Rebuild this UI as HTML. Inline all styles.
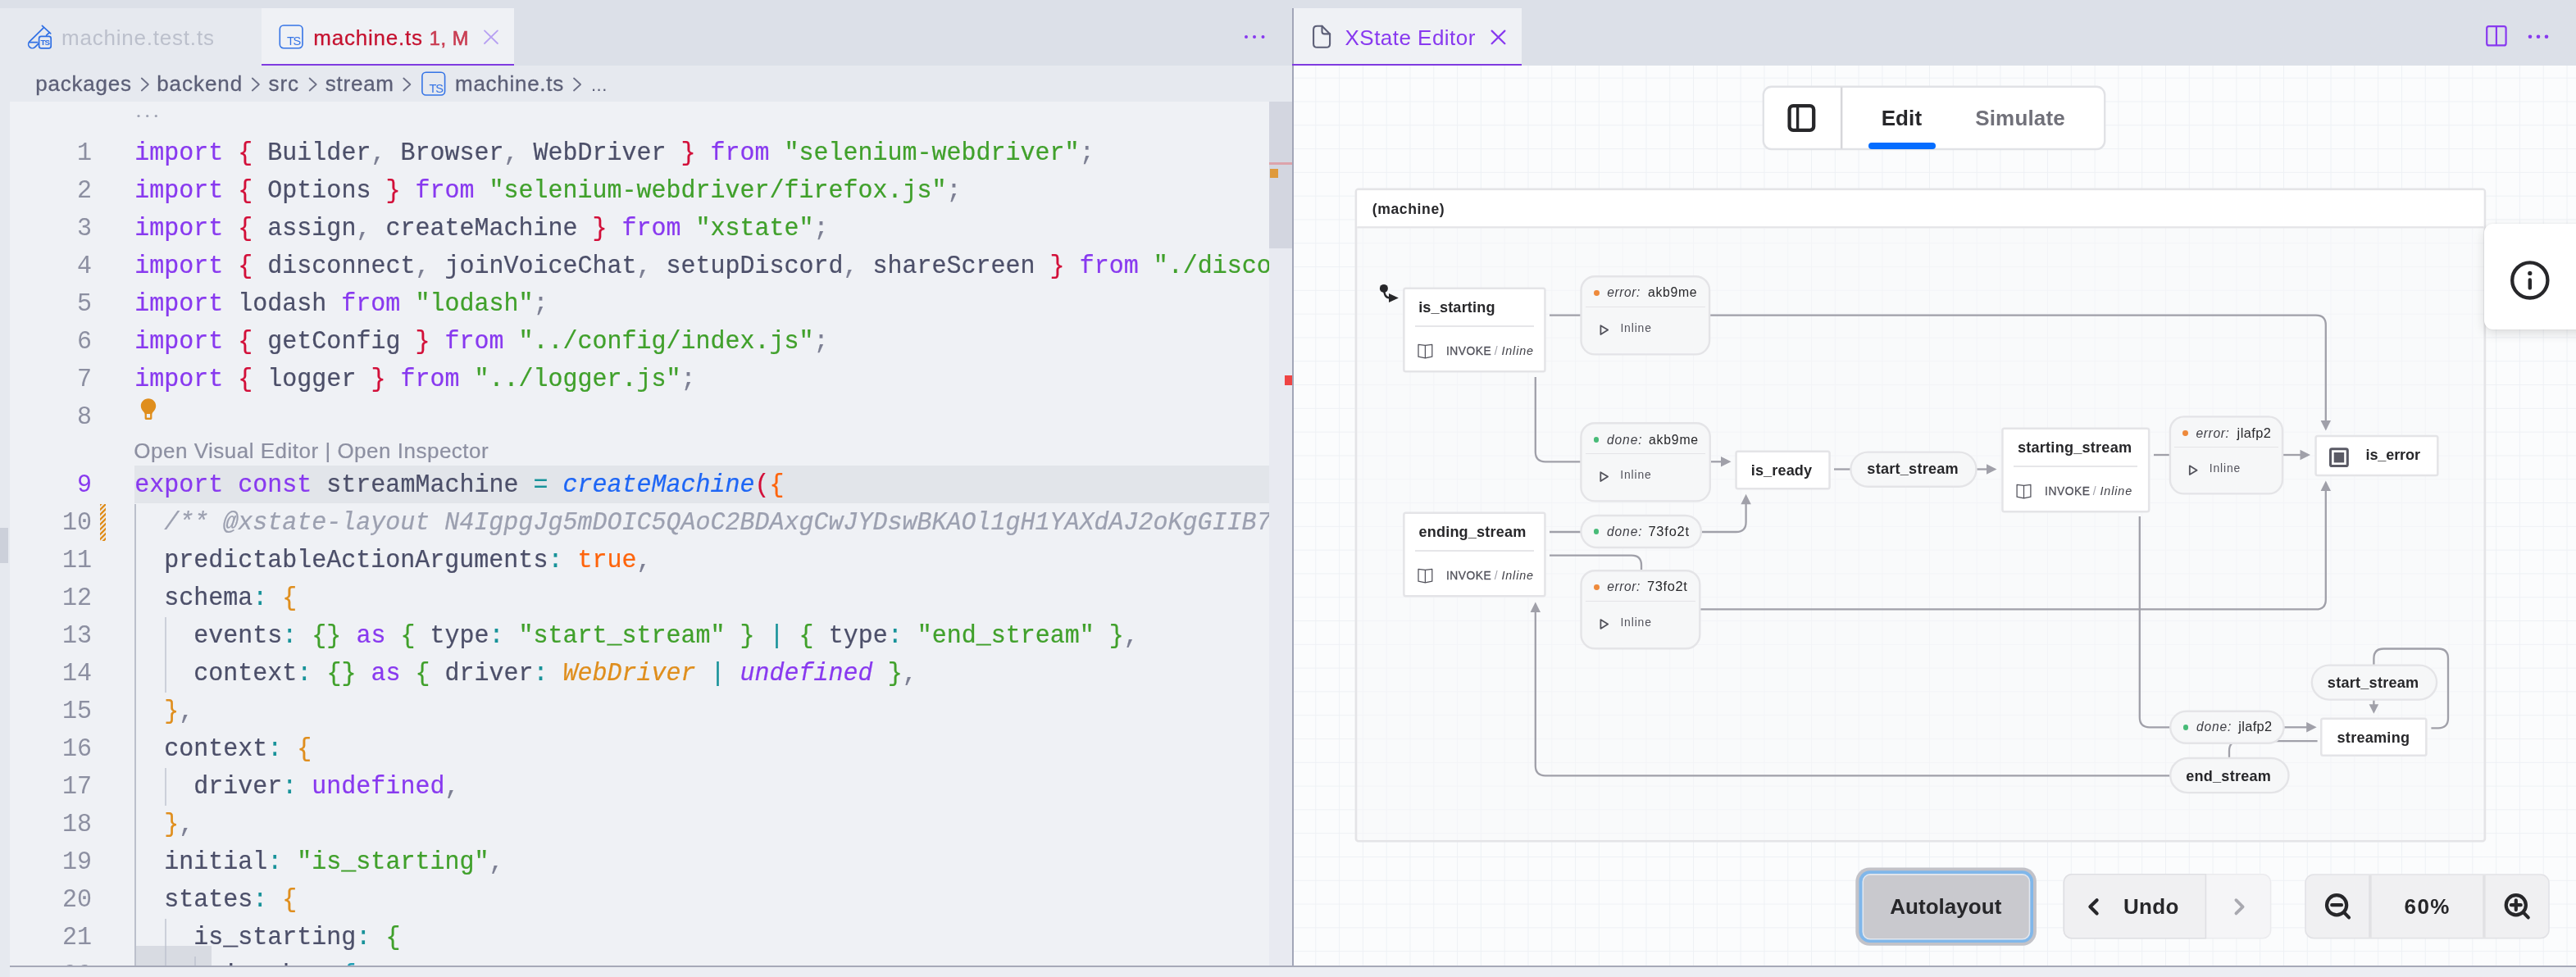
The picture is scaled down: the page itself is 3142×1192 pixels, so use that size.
<!DOCTYPE html>
<html lang="en"><head><meta charset="utf-8"><title>machine.ts - XState Editor</title>
<style>
html,body{margin:0;padding:0;}
body{width:3142px;height:1192px;position:relative;overflow:hidden;background:#eff1f5;font-family:"Liberation Sans",sans-serif;}
body div{position:absolute;box-sizing:border-box;}
#app{left:0;top:0;width:3142px;height:1192px;will-change:transform;overflow:hidden;}
.t{white-space:pre;}
svg{position:absolute;left:0;top:0;overflow:visible;}
.code{font-family:"Liberation Mono",monospace;font-size:30px;line-height:46px;height:46px;white-space:pre;color:#4c4f69;left:164.3px;transform:scaleY(1.05);transform-origin:0 31px;-webkit-text-stroke:0.22px currentColor;}
.code span{position:static;}
.ln{font-family:"Liberation Mono",monospace;font-size:30px;line-height:46px;height:46px;width:100px;left:12px;text-align:right;color:#8c8fa1;transform:scaleY(1.05);transform-origin:0 31px;}
.k{color:#8839ef}.s{color:#40a02b}.p{color:#7c7f93}.o{color:#179299}.b1{color:#d20f39}.b2{color:#fe640b}.b3{color:#df8e1d}.b4{color:#40a02b}.b5{color:#209fb5}
.f{color:#1e66f5;font-style:italic}.c{color:#9ca0b0;font-style:italic}.n{color:#fe640b}.ty{color:#df8e1d;font-style:italic}.ui{color:#8839ef;font-style:italic}
</style></head>
<body>
<div id="app">
<div style="left:0.0px;top:0.0px;width:3142.0px;height:79.8px;background:#dce0e8;"></div>
<div style="left:0.0px;top:79.8px;width:1577.0px;height:44.2px;background:#e6e9ef;"></div>
<div style="left:0.0px;top:10.0px;width:319.0px;height:69.8px;background:#e6e9ef;"></div>
<div style="left:0.0px;top:124.0px;width:12.0px;height:1068.0px;background:#e6e9ef;"></div>
<div style="left:0.0px;top:644.0px;width:10.0px;height:43.0px;background:#ccd0da;"></div>
<div style="left:12.0px;top:124.0px;width:1536.0px;height:1055.0px;background:#eff1f5;"></div>
<div style="left:319.0px;top:10.0px;width:308.0px;height:69.8px;background:#eff1f5;"></div>
<div style="left:319.0px;top:77.5px;width:308.0px;height:2.3px;background:#7f3be0;"></div>
<svg width="3142" height="1192" viewBox="0 0 3142 1192">
<g fill="none" stroke="#2f6fe4" stroke-width="1.7" stroke-linejoin="round" stroke-linecap="round">
<path d="M51.4,31.3 L61.7,40.9"/>
<path d="M52.9,34.1 L36.1,50.6 A4.75,4.75 0 0 0 42.8,57.4 L47,53.2"/>
<path d="M60.2,39.6 L56.6,43.2"/>
<path d="M36.3,51.6 L45.6,51.6"/>
<rect x="47.6" y="44.3" width="14.6" height="14.6" rx="2.6" fill="#e6e9ef"/>
</g>
<g fill="none" stroke="#3574e6" stroke-width="1.6">
<rect x="341.3" y="31" width="27.7" height="27.7" rx="4.6"/>
<rect x="514.9" y="88.3" width="27.7" height="27.7" rx="4.6"/>
</g>
<g fill="none" stroke="#b7a0f2" stroke-width="1.8" stroke-linecap="round">
<path d="M591,37.4 L606.9,53 M606.9,37.4 L591,53"/>
</g>
<g fill="#8839ef"><circle cx="1520" cy="45" r="2"/><circle cx="1530" cy="45" r="2"/><circle cx="1540.5" cy="45" r="2"/></g>
<g fill="none" stroke="#6c6f85" stroke-width="1.8" stroke-linecap="round" stroke-linejoin="round">
<path d="M172.8,95.5 L180.9,103 L172.8,110.5"/>
<path d="M307.8,95.5 L315.9,103 L307.8,110.5"/>
<path d="M377.6,95.5 L385.7,103 L377.6,110.5"/>
<path d="M492.3,95.5 L500.4,103 L492.3,110.5"/>
<path d="M700,95.5 L708.1,103 L700,110.5"/>
</g>
</svg>
<div class="t" style="left:49.60px;top:46px;font-size:9.80px;line-height:11px;color:#2f6fe4;font-weight:bold;font-style:normal;letter-spacing:-1.0px;">TS</div>
<div class="t" style="left:350.00px;top:42px;font-size:14.60px;line-height:16px;color:#3574e6;font-weight:normal;font-style:normal;letter-spacing:-1.3px;">TS</div>
<div class="t" style="left:523.60px;top:100px;font-size:14.60px;line-height:16px;color:#3574e6;font-weight:normal;font-style:normal;letter-spacing:-1.3px;">TS</div>
<div class="t" style="left:74.95px;top:31px;font-size:26.00px;line-height:30px;color:#bcc0cc;font-weight:normal;font-style:normal;letter-spacing:0.794px;">machine.test.ts</div>
<div class="t" style="left:382.25px;top:31px;font-size:26.00px;line-height:30px;color:#c5112f;font-weight:normal;font-style:normal;letter-spacing:0.773px;-webkit-text-stroke:0.25px #c5112f;">machine.ts</div>
<div class="t" style="left:523.83px;top:34px;font-size:23.60px;line-height:26px;color:#c93d52;font-weight:normal;font-style:normal;letter-spacing:0.572px;-webkit-text-stroke:0.6px #c93d52;">1, M</div>
<div class="t" style="left:43.31px;top:87px;font-size:26.00px;line-height:30px;color:#5c5f77;font-weight:normal;font-style:normal;letter-spacing:0.760px;-webkit-text-stroke:0.3px #5c5f77;">packages</div>
<div class="t" style="left:191.21px;top:87px;font-size:26.00px;line-height:30px;color:#5c5f77;font-weight:normal;font-style:normal;letter-spacing:0.939px;-webkit-text-stroke:0.3px #5c5f77;">backend</div>
<div class="t" style="left:327.59px;top:87px;font-size:26.00px;line-height:30px;color:#5c5f77;font-weight:normal;font-style:normal;letter-spacing:0.942px;-webkit-text-stroke:0.3px #5c5f77;">src</div>
<div class="t" style="left:396.79px;top:87px;font-size:26.00px;line-height:30px;color:#5c5f77;font-weight:normal;font-style:normal;letter-spacing:0.755px;-webkit-text-stroke:0.3px #5c5f77;">stream</div>
<div class="t" style="left:555.04px;top:87px;font-size:26.00px;line-height:30px;color:#5c5f77;font-weight:normal;font-style:normal;letter-spacing:0.717px;-webkit-text-stroke:0.3px #5c5f77;">machine.ts</div>
<div class="t" style="left:721.00px;top:91px;font-size:22.00px;line-height:25px;color:#5c5f77;font-weight:normal;font-style:normal;letter-spacing:0.5px;">...</div>
<svg width="3142" height="1192" viewBox="0 0 3142 1192"><g fill="#9ca0b0"><circle cx="169" cy="141.5" r="1.6"/><circle cx="179.7" cy="141.5" r="1.6"/><circle cx="190.3" cy="141.5" r="1.6"/></g></svg>
<div style="left:164.3px;top:568.4px;width:1383.7px;height:45.5px;background:#e2e5ea;"></div>
<div class="ln" style="top:163.6px;color:#8c8fa1;">1</div>
<div class="code" style="top:163.6px;"><span class="k">import</span> <span class="b1">{</span> Builder<span class="p">,</span> Browser<span class="p">,</span> WebDriver <span class="b1">}</span> <span class="k">from</span> <span class="s">"selenium-webdriver"</span><span class="p">;</span></div>
<div class="ln" style="top:209.6px;color:#8c8fa1;">2</div>
<div class="code" style="top:209.6px;"><span class="k">import</span> <span class="b1">{</span> Options <span class="b1">}</span> <span class="k">from</span> <span class="s">"selenium-webdriver/firefox.js"</span><span class="p">;</span></div>
<div class="ln" style="top:255.6px;color:#8c8fa1;">3</div>
<div class="code" style="top:255.6px;"><span class="k">import</span> <span class="b1">{</span> assign<span class="p">,</span> createMachine <span class="b1">}</span> <span class="k">from</span> <span class="s">"xstate"</span><span class="p">;</span></div>
<div class="ln" style="top:301.6px;color:#8c8fa1;">4</div>
<div class="code" style="top:301.6px;"><span class="k">import</span> <span class="b1">{</span> disconnect<span class="p">,</span> joinVoiceChat<span class="p">,</span> setupDiscord<span class="p">,</span> shareScreen <span class="b1">}</span> <span class="k">from</span> <span class="s">"./disco</span></div>
<div class="ln" style="top:347.6px;color:#8c8fa1;">5</div>
<div class="code" style="top:347.6px;"><span class="k">import</span> lodash <span class="k">from</span> <span class="s">"lodash"</span><span class="p">;</span></div>
<div class="ln" style="top:393.6px;color:#8c8fa1;">6</div>
<div class="code" style="top:393.6px;"><span class="k">import</span> <span class="b1">{</span> getConfig <span class="b1">}</span> <span class="k">from</span> <span class="s">"../config/index.js"</span><span class="p">;</span></div>
<div class="ln" style="top:439.6px;color:#8c8fa1;">7</div>
<div class="code" style="top:439.6px;"><span class="k">import</span> <span class="b1">{</span> logger <span class="b1">}</span> <span class="k">from</span> <span class="s">"../logger.js"</span><span class="p">;</span></div>
<div class="ln" style="top:485.6px;color:#8c8fa1;">8</div>
<div class="code" style="top:485.6px;"></div>
<div class="t" style="left:163.36px;top:535px;font-size:26.00px;line-height:30px;color:#8c8fa1;font-weight:normal;font-style:normal;letter-spacing:0.501px;-webkit-text-stroke:0.2px #8c8fa1;">Open Visual Editor | Open Inspector</div>
<div class="ln" style="top:569.2px;color:#8839ef;">9</div>
<div class="code" style="top:569.2px;"><span class="k">export</span> <span class="k">const</span> streamMachine <span class="o">=</span> <span class="f">createMachine</span><span class="b1">(</span><span class="b2">{</span></div>
<div class="ln" style="top:615.2px;color:#8c8fa1;">10</div>
<div class="code" style="top:615.2px;"><span class="c">  /** @xstate-layout N4IgpgJg5mDOIC5QAoC2BDAxgCwJYDswBKAOl1gH1YAXdAJ2oKgGIIB7</span></div>
<div class="ln" style="top:661.2px;color:#8c8fa1;">11</div>
<div class="code" style="top:661.2px;">  predictableActionArguments<span class="o">:</span> <span class="n">true</span><span class="p">,</span></div>
<div class="ln" style="top:707.2px;color:#8c8fa1;">12</div>
<div class="code" style="top:707.2px;">  schema<span class="o">:</span> <span class="b3">{</span></div>
<div class="ln" style="top:753.2px;color:#8c8fa1;">13</div>
<div class="code" style="top:753.2px;">    events<span class="o">:</span> <span class="b4">{}</span> <span class="k">as</span> <span class="b4">{</span> type<span class="o">:</span> <span class="s">"start_stream"</span> <span class="b4">}</span> <span class="o">|</span> <span class="b4">{</span> type<span class="o">:</span> <span class="s">"end_stream"</span> <span class="b4">}</span><span class="p">,</span></div>
<div class="ln" style="top:799.2px;color:#8c8fa1;">14</div>
<div class="code" style="top:799.2px;">    context<span class="o">:</span> <span class="b4">{}</span> <span class="k">as</span> <span class="b4">{</span> driver<span class="o">:</span> <span class="ty">WebDriver</span> <span class="o">|</span> <span class="ui">undefined</span> <span class="b4">}</span><span class="p">,</span></div>
<div class="ln" style="top:845.2px;color:#8c8fa1;">15</div>
<div class="code" style="top:845.2px;">  <span class="b3">}</span><span class="p">,</span></div>
<div class="ln" style="top:891.2px;color:#8c8fa1;">16</div>
<div class="code" style="top:891.2px;">  context<span class="o">:</span> <span class="b3">{</span></div>
<div class="ln" style="top:937.2px;color:#8c8fa1;">17</div>
<div class="code" style="top:937.2px;">    driver<span class="o">:</span> <span class="k">undefined</span><span class="p">,</span></div>
<div class="ln" style="top:983.2px;color:#8c8fa1;">18</div>
<div class="code" style="top:983.2px;">  <span class="b3">}</span><span class="p">,</span></div>
<div class="ln" style="top:1029.2px;color:#8c8fa1;">19</div>
<div class="code" style="top:1029.2px;">  initial<span class="o">:</span> <span class="s">"is_starting"</span><span class="p">,</span></div>
<div class="ln" style="top:1075.2px;color:#8c8fa1;">20</div>
<div class="code" style="top:1075.2px;">  states<span class="o">:</span> <span class="b3">{</span></div>
<div class="ln" style="top:1121.2px;color:#8c8fa1;">21</div>
<div class="code" style="top:1121.2px;">    is_starting<span class="o">:</span> <span class="b4">{</span></div>
<div class="ln" style="top:1167.2px;color:#8c8fa1;">22</div>
<div class="code" style="top:1167.2px;">      invoke<span class="o">:</span> <span class="b5">{</span></div>
<div style="left:164.4px;top:614.5px;width:1.8px;height:563.5px;background:#bcc0cc;"></div>
<div style="left:200.5px;top:753.0px;width:2.0px;height:92.0px;background:#ccd0da;"></div>
<div style="left:200.5px;top:937.0px;width:2.0px;height:46.0px;background:#ccd0da;"></div>
<div style="left:200.5px;top:1121.0px;width:2.0px;height:57.0px;background:#ccd0da;"></div>
<div style="left:236.5px;top:1167.0px;width:2.0px;height:11.0px;background:#ccd0da;"></div>
<div style="left:166.0px;top:1154.0px;width:92.0px;height:24.0px;background:rgba(188,192,204,0.45);"></div>
<div style="left:122.0px;top:615.0px;width:6.5px;height:45.0px;background:repeating-linear-gradient(135deg,#df8e1d 0 2px,rgba(223,142,29,0.15) 2px 4.2px);"></div>
<svg width="3142" height="1192" viewBox="0 0 3142 1192">
<path d="M181,486.3 C175.8,486.3 171.8,490.3 171.8,495.3 C171.8,498.6 173.6,500.9 175.4,502.8 C176.2,503.8 176.6,504.6 176.6,505.6 L176.6,510.2 C176.6,511.3 177.4,512 178.5,512 L183.5,512 C184.6,512 185.4,511.3 185.4,510.2 L185.4,505.6 C185.4,504.6 185.8,503.8 186.6,502.8 C188.4,500.9 190.2,498.6 190.2,495.3 C190.2,490.3 186.2,486.3 181,486.3 Z" fill="#df8e1d"/>
<rect x="178.9" y="505" width="4.2" height="4.6" fill="#eff1f5"/>
</svg>
<div style="left:1548.0px;top:124.0px;width:28.5px;height:1055.0px;background:#e8eaf1;"></div>
<div style="left:1548.0px;top:124.0px;width:28.5px;height:179.0px;background:#d3d6e0;"></div>
<div style="left:1548.0px;top:198.0px;width:28.5px;height:3.0px;background:#dca3ab;"></div>
<div style="left:1549.0px;top:205.5px;width:9.5px;height:11.0px;background:#df9a3c;"></div>
<div style="left:1567.0px;top:458.0px;width:9.5px;height:12.0px;background:#ef4444;"></div>
<div style="left:1576.3px;top:10.0px;width:2.0px;height:1170.0px;background:#a2a6b8;"></div>
<div style="left:12.0px;top:1178.0px;width:3130.0px;height:2.0px;background:#a6a9b8;"></div>
<div style="left:12.0px;top:1180.0px;width:3130.0px;height:12.0px;background:#eceef3;"></div>
<div style="left:1578.3px;top:0.0px;width:1563.7px;height:79.8px;background:#dce0e8;"></div>
<div style="left:1578.3px;top:79.8px;width:1563.7px;height:1098.4px;background-color:#fbfcfd;background-image:linear-gradient(to right,#eef1f5 1.4px,transparent 1.4px),linear-gradient(to bottom,#eef1f5 1.4px,transparent 1.4px);background-size:28.8px 28.8px;background-position:26.3px 14.7px;"></div>
<div style="left:1578.3px;top:10.0px;width:277.7px;height:69.8px;background:#eff1f5;"></div>
<div style="left:1576.3px;top:77.5px;width:279.7px;height:2.3px;background:#7f3be0;"></div>
<div class="t" style="left:1640.51px;top:31px;font-size:26.00px;line-height:30px;color:#8839ef;font-weight:normal;font-style:normal;letter-spacing:0.473px;">XState Editor</div>
<svg width="3142" height="1192" viewBox="0 0 3142 1192">
<g fill="none" stroke="#5c5f77" stroke-width="2.1" stroke-linejoin="round" stroke-linecap="round">
<path d="M1612.5,31.8 L1606.5,31.8 Q1602.1,31.8 1602.1,36.2 L1602.1,53.4 Q1602.1,57.8 1606.5,57.8 L1617.7,57.8 Q1622.1,57.8 1622.1,53.4 L1622.1,41.4 Z"/>
<path d="M1612.5,31.8 L1612.5,38.4 Q1612.5,41.4 1615.5,41.4 L1622.1,41.4"/>
</g>
<g fill="none" stroke="#8839ef" stroke-width="2.2" stroke-linecap="round">
<path d="M1819.6,37.6 L1835.4,53.2 M1835.4,37.6 L1819.6,53.2"/>
</g>
<g fill="none" stroke="#8839ef" stroke-width="2.2" stroke-linejoin="round">
<rect x="3033.2" y="32.2" width="23.4" height="23.2" rx="2.5"/>
<path d="M3044.9,32.2 V55.4"/>
</g>
<g fill="#8839ef"><circle cx="3086" cy="44.8" r="2.3"/><circle cx="3096" cy="44.8" r="2.3"/><circle cx="3106" cy="44.8" r="2.3"/></g>
</svg>
<svg width="3142" height="1192" viewBox="0 0 3142 1192"><rect x="2150.8" y="105.8" width="416.4" height="76.2" rx="10" fill="#fff" stroke="#e1e2e6" stroke-width="2.4"/><rect x="2244.9" y="106.5" width="2.5" height="75" fill="#d6d6da"/></svg>
<svg width="3142" height="1192" viewBox="0 0 3142 1192">
<g fill="none" stroke="#27272a" stroke-linejoin="round">
<rect x="2182.6" y="129.2" width="29.6" height="29.6" rx="4.5" stroke-width="4.3"/>
<path d="M2192.6,129.2 V158.8" stroke-width="3.4"/>
</g></svg>
<div class="t" style="left:2294.64px;top:129px;font-size:26.00px;line-height:30px;color:#27272a;font-weight:bold;font-style:normal;letter-spacing:0.118px;">Edit</div>
<div class="t" style="left:2409.22px;top:129px;font-size:26.00px;line-height:30px;color:#71717a;font-weight:bold;font-style:normal;letter-spacing:0.167px;">Simulate</div>
<div style="left:2279.0px;top:173.9px;width:82.0px;height:8.2px;background:#056dff;border-radius:4.1px;"></div>
<svg width="3142" height="1192" viewBox="0 0 3142 1192"><rect x="1653.95" y="230.95" width="1376.9" height="795.3" rx="3" fill="rgba(248,248,249,0.5)" stroke="#e4e4e7" stroke-width="2.7"/><rect x="1655.3" y="232.3" width="1374.2" height="44.6" fill="#fff"/><rect x="1655.3" y="276.2" width="1374.2" height="2.2" fill="#e4e4e7"/></svg>
<div class="t" style="left:1673.72px;top:245px;font-size:17.60px;line-height:20px;color:#27272a;font-weight:bold;font-style:normal;letter-spacing:0.606px;">(machine)</div>
<svg width="3142" height="1192" viewBox="0 0 3142 1192"><g fill="none" stroke="#a0a0a9" stroke-width="2.3"><path d="M1890,384.7 H1930"/><path d="M2084,384.7 H2824.8 Q2836.8,384.7 2836.8,396.7 V514"/><path d="M1872.8,460 V551.3 Q1872.8,563.3 1884.8,563.3 H1930"/><path d="M2084,563.3 H2100"/><path d="M1890,649 H1930"/><path d="M2073,649 H2117.6 Q2129.6,649 2129.6,637 V614"/><path d="M1890,677.7 H1990 Q2002,677.7 2002,689.7 V697"/><path d="M2072,743.4 H2824.8 Q2836.8,743.4 2836.8,731.4 V598"/><path d="M2237,572.5 H2259"/><path d="M2409,572.5 H2424"/><path d="M2627,555 H2649"/><path d="M2782,555 H2806"/><path d="M2609.8,630 V875.3 Q2609.8,887.3 2621.8,887.3 H2649"/><path d="M2784,887.3 H2814"/><path d="M2965.4,888.3 H2974 Q2986,888.3 2986,876.3 V803.5 Q2986,791.5 2974,791.5 H2907.4 Q2895.4,791.5 2895.4,803.5 V813"/><path d="M2895.4,852 V860"/><path d="M2826.6,904.2 H2731 Q2719,904.2 2719,916.2 V926"/><path d="M2649,946.3 H1884.8 Q1872.8,946.3 1872.8,934.3 V746"/></g><polygon points="2836.8,525.4 2830.6,512.9 2843.0,512.9" fill="#a0a0a9"/><polygon points="2111.5,563.3 2099.0,557.1 2099.0,569.5" fill="#a0a0a9"/><polygon points="2129.6,602.8 2123.4,615.3 2135.8,615.3" fill="#a0a0a9"/><polygon points="2836.8,586.4 2830.6,598.9 2843.0,598.9" fill="#a0a0a9"/><polygon points="2435.5,572.5 2423.0,566.3 2423.0,578.7" fill="#a0a0a9"/><polygon points="2818.0,555.0 2805.5,548.8 2805.5,561.2" fill="#a0a0a9"/><polygon points="2825.7,887.3 2813.2,881.1 2813.2,893.5" fill="#a0a0a9"/><polygon points="2895.4,870.8 2889.6,859.3 2901.2,859.3" fill="#a0a0a9"/><polygon points="1872.8,734.6 1866.6,747.1 1879.0,747.1" fill="#a0a0a9"/>
<g fill="#27272a"><circle cx="1687.9" cy="351.9" r="5"/><polygon points="1705.9,363.5 1694,358 1694,369"/></g><path d="M1687.9,352 C1688.5,360 1690,363.5 1696,363.5" fill="none" stroke="#27272a" stroke-width="2.4"/></svg>
<svg width="3142" height="1192" viewBox="0 0 3142 1192"><rect x="1712.35" y="351.65" width="172.10" height="101.50" rx="2.25" fill="#fff" stroke="#e4e4e7" stroke-width="2.5"/><rect x="1712.35" y="625.65" width="172.10" height="101.50" rx="2.25" fill="#fff" stroke="#e4e4e7" stroke-width="2.5"/><rect x="2442.45" y="522.65" width="178.70" height="101.50" rx="2.25" fill="#fff" stroke="#e4e4e7" stroke-width="2.5"/><rect x="2117.55" y="550.85" width="114.00" height="45.30" rx="2.25" fill="#fff" stroke="#e4e4e7" stroke-width="2.5"/><rect x="2824.55" y="532.05" width="148.80" height="48.00" rx="2.25" fill="#fff" stroke="#e4e4e7" stroke-width="2.5"/><rect x="2831.25" y="876.85" width="128.10" height="44.90" rx="2.25" fill="#fff" stroke="#e4e4e7" stroke-width="2.5"/><rect x="1928.50" y="337.30" width="156.60" height="95.10" rx="16.80" fill="#f6f7f8" stroke="#e4e4e7" stroke-width="2.4"/><rect x="1928.40" y="516.30" width="157.40" height="95.10" rx="16.80" fill="#f6f7f8" stroke="#e4e4e7" stroke-width="2.4"/><rect x="1928.50" y="696.20" width="144.80" height="95.10" rx="16.80" fill="#f6f7f8" stroke="#e4e4e7" stroke-width="2.4"/><rect x="2646.90" y="508.40" width="137.10" height="94.00" rx="16.80" fill="#f6f7f8" stroke="#e4e4e7" stroke-width="2.4"/><rect x="1928.40" y="629.00" width="146.50" height="39.00" rx="19.50" fill="#f6f7f8" stroke="#e4e4e7" stroke-width="2.4"/><rect x="2647.20" y="867.80" width="138.40" height="39.00" rx="19.50" fill="#f6f7f8" stroke="#e4e4e7" stroke-width="2.4"/><rect x="2257.40" y="551.60" width="153.10" height="42.10" rx="21.05" fill="#f6f7f8" stroke="#e4e4e7" stroke-width="2.4"/><rect x="2819.80" y="811.60" width="152.30" height="42.00" rx="21.00" fill="#f6f7f8" stroke="#e4e4e7" stroke-width="2.4"/><rect x="2647.20" y="925.00" width="144.30" height="42.10" rx="21.05" fill="#f6f7f8" stroke="#e4e4e7" stroke-width="2.4"/></svg>
<div class="t" style="left:1730.13px;top:365px;font-size:18.10px;line-height:20px;color:#27272a;font-weight:bold;font-style:normal;letter-spacing:0.200px;">is_starting</div>
<div style="left:1726.0px;top:397.4px;width:144.8px;height:1.3px;background:#e6e6e9;"></div>
<div class="t" style="left:1763.92px;top:421px;font-size:13.80px;line-height:15px;color:#52525b;font-weight:normal;font-style:normal;letter-spacing:0.540px;-webkit-text-stroke:0.3px #52525b;">INVOKE</div>
<div class="t" style="left:1822.70px;top:420px;font-size:14.00px;line-height:16px;color:#a1a1aa;font-weight:normal;font-style:normal;letter-spacing:0.115px;">/</div>
<div class="t" style="left:1831.42px;top:420px;font-size:14.40px;line-height:16px;color:#3f3f46;font-weight:normal;font-style:italic;letter-spacing:0.853px;">Inline</div>
<div class="t" style="left:1730.48px;top:639px;font-size:18.10px;line-height:20px;color:#27272a;font-weight:bold;font-style:normal;letter-spacing:0.181px;">ending_stream</div>
<div style="left:1726.0px;top:671.4px;width:144.8px;height:1.3px;background:#e6e6e9;"></div>
<div class="t" style="left:1763.92px;top:695px;font-size:13.80px;line-height:15px;color:#52525b;font-weight:normal;font-style:normal;letter-spacing:0.540px;-webkit-text-stroke:0.3px #52525b;">INVOKE</div>
<div class="t" style="left:1822.70px;top:694px;font-size:14.00px;line-height:16px;color:#a1a1aa;font-weight:normal;font-style:normal;letter-spacing:0.115px;">/</div>
<div class="t" style="left:1831.42px;top:694px;font-size:14.40px;line-height:16px;color:#3f3f46;font-weight:normal;font-style:italic;letter-spacing:0.853px;">Inline</div>
<div class="t" style="left:2460.97px;top:536px;font-size:18.10px;line-height:20px;color:#27272a;font-weight:bold;font-style:normal;letter-spacing:0.237px;">starting_stream</div>
<div style="left:2456.1px;top:568.4px;width:151.4px;height:1.3px;background:#e6e6e9;"></div>
<div class="t" style="left:2494.02px;top:592px;font-size:13.80px;line-height:15px;color:#52525b;font-weight:normal;font-style:normal;letter-spacing:0.540px;-webkit-text-stroke:0.3px #52525b;">INVOKE</div>
<div class="t" style="left:2552.80px;top:591px;font-size:14.00px;line-height:16px;color:#a1a1aa;font-weight:normal;font-style:normal;letter-spacing:0.115px;">/</div>
<div class="t" style="left:2561.52px;top:591px;font-size:14.40px;line-height:16px;color:#3f3f46;font-weight:normal;font-style:italic;letter-spacing:0.853px;">Inline</div>
<div class="t" style="left:2135.73px;top:564px;font-size:18.10px;line-height:20px;color:#27272a;font-weight:bold;font-style:normal;letter-spacing:0.131px;">is_ready</div>
<div class="t" style="left:2885.53px;top:545px;font-size:18.10px;line-height:20px;color:#27272a;font-weight:bold;font-style:normal;letter-spacing:-0.141px;">is_error</div>
<div class="t" style="left:2850.57px;top:890px;font-size:18.10px;line-height:20px;color:#27272a;font-weight:bold;font-style:normal;letter-spacing:0.242px;">streaming</div>
<div style="left:1943.8px;top:354.3px;width:6.8px;height:6.8px;background:#ee8a3c;border-radius:50%;"></div>
<div class="t" style="left:1960.19px;top:348px;font-size:15.60px;line-height:17px;color:#3f3f46;font-weight:normal;font-style:italic;letter-spacing:0.589px;">error:</div>
<div class="t" style="left:2009.93px;top:348px;font-size:15.80px;line-height:17px;color:#27272a;font-weight:normal;font-style:normal;letter-spacing:0.687px;">akb9me</div>
<div style="left:1933.8px;top:373.6px;width:146.0px;height:1.2px;background:#e4e4e7;"></div>
<div class="t" style="left:1976.41px;top:392px;font-size:13.90px;line-height:16px;color:#52525b;font-weight:normal;font-style:normal;letter-spacing:0.851px;">Inline</div>
<div style="left:1943.7px;top:533.3px;width:6.8px;height:6.8px;background:#48bb78;border-radius:50%;"></div>
<div class="t" style="left:1960.09px;top:528px;font-size:15.60px;line-height:17px;color:#3f3f46;font-weight:normal;font-style:italic;letter-spacing:0.848px;">done:</div>
<div class="t" style="left:2011.03px;top:528px;font-size:15.80px;line-height:17px;color:#27272a;font-weight:normal;font-style:normal;letter-spacing:0.787px;">akb9me</div>
<div style="left:1933.7px;top:552.6px;width:146.8px;height:1.2px;background:#e4e4e7;"></div>
<div class="t" style="left:1976.31px;top:571px;font-size:13.90px;line-height:16px;color:#52525b;font-weight:normal;font-style:normal;letter-spacing:0.851px;">Inline</div>
<div style="left:1943.8px;top:713.2px;width:6.8px;height:6.8px;background:#ee8a3c;border-radius:50%;"></div>
<div class="t" style="left:1960.19px;top:707px;font-size:15.60px;line-height:17px;color:#3f3f46;font-weight:normal;font-style:italic;letter-spacing:0.589px;">error:</div>
<div class="t" style="left:2009.08px;top:706px;font-size:16.40px;line-height:18px;color:#27272a;font-weight:normal;font-style:normal;letter-spacing:0.650px;">73fo2t</div>
<div style="left:1933.8px;top:732.5px;width:134.2px;height:1.2px;background:#e4e4e7;"></div>
<div class="t" style="left:1976.41px;top:751px;font-size:13.90px;line-height:16px;color:#52525b;font-weight:normal;font-style:normal;letter-spacing:0.851px;">Inline</div>
<div style="left:2662.2px;top:525.4px;width:6.8px;height:6.8px;background:#ee8a3c;border-radius:50%;"></div>
<div class="t" style="left:2678.59px;top:520px;font-size:15.60px;line-height:17px;color:#3f3f46;font-weight:normal;font-style:italic;letter-spacing:0.589px;">error:</div>
<div class="t" style="left:2728.61px;top:519px;font-size:16.40px;line-height:18px;color:#27272a;font-weight:normal;font-style:normal;letter-spacing:0.403px;">jlafp2</div>
<div style="left:2652.2px;top:544.7px;width:126.5px;height:1.2px;background:#e4e4e7;"></div>
<div class="t" style="left:2694.81px;top:563px;font-size:13.90px;line-height:16px;color:#52525b;font-weight:normal;font-style:normal;letter-spacing:0.851px;">Inline</div>
<div style="left:1943.7px;top:645.3px;width:6.8px;height:6.8px;background:#48bb78;border-radius:50%;"></div>
<div class="t" style="left:1960.09px;top:640px;font-size:15.60px;line-height:17px;color:#3f3f46;font-weight:normal;font-style:italic;letter-spacing:0.848px;">done:</div>
<div class="t" style="left:2010.38px;top:639px;font-size:16.40px;line-height:18px;color:#27272a;font-weight:normal;font-style:normal;letter-spacing:0.830px;">73fo2t</div>
<div style="left:2662.5px;top:884.1px;width:6.8px;height:6.8px;background:#48bb78;border-radius:50%;"></div>
<div class="t" style="left:2678.89px;top:878px;font-size:15.60px;line-height:17px;color:#3f3f46;font-weight:normal;font-style:italic;letter-spacing:0.848px;">done:</div>
<div class="t" style="left:2730.21px;top:877px;font-size:16.40px;line-height:18px;color:#27272a;font-weight:normal;font-style:normal;letter-spacing:0.363px;">jlafp2</div>
<div class="t" style="left:2277.37px;top:562px;font-size:18.10px;line-height:20px;color:#27272a;font-weight:bold;font-style:normal;letter-spacing:0.243px;">start_stream</div>
<div class="t" style="left:2838.87px;top:823px;font-size:18.10px;line-height:20px;color:#27272a;font-weight:bold;font-style:normal;letter-spacing:0.243px;">start_stream</div>
<div class="t" style="left:2666.18px;top:937px;font-size:18.10px;line-height:20px;color:#27272a;font-weight:bold;font-style:normal;letter-spacing:0.236px;">end_stream</div>
<svg width="3142" height="1192" viewBox="0 0 3142 1192"><g fill="none" stroke="#52525b" stroke-linejoin="round" stroke-linecap="round"><path d="M1730.0,420.4 L1738.4,421.3 L1746.8,420.4 V435.2 L1738.4,436.8 L1730.0,435.2 Z M1738.4,421.3 V436.8" stroke-width="1.25"/><path d="M1730.0,694.4 L1738.4,695.3 L1746.8,694.4 V709.2 L1738.4,710.8 L1730.0,709.2 Z M1738.4,695.3 V710.8" stroke-width="1.25"/><path d="M2460.1,591.4 L2468.5,592.3 L2476.9,591.4 V606.2 L2468.5,607.8 L2460.1,606.2 Z M2468.5,592.3 V607.8" stroke-width="1.25"/><rect x="2842.5" y="547.7" width="20.8" height="20.8" rx="1.8" stroke="#5a5a65" stroke-width="3.1"/><rect x="2846.7" y="552" width="12.5" height="12.4" fill="#5a5a65" stroke="none"/><path d="M1952.4,397.2 L1961.2,402.6 L1952.4,408.0 Z" stroke-width="1.8"/><path d="M1952.3,576.2 L1961.1,581.6 L1952.3,587.0 Z" stroke-width="1.8"/><path d="M1952.4,756.1 L1961.2,761.5 L1952.4,766.9 Z" stroke-width="1.8"/><path d="M2670.8,568.3 L2679.6,573.7 L2670.8,579.1 Z" stroke-width="1.8"/></g></svg>
<div style="left:3029.6px;top:273.4px;width:130.0px;height:129.0px;background:#fff;border-radius:11px;box-shadow:0 5px 14px rgba(0,0,0,0.13),0 0 3px rgba(0,0,0,0.07);"></div>
<svg width="3142" height="1192" viewBox="0 0 3142 1192">
<circle cx="3085.8" cy="341.9" r="21.6" fill="none" stroke="#27272a" stroke-width="4.3"/>
<circle cx="3085.8" cy="333.4" r="2.6" fill="#27272a"/>
<path d="M3085.8,341.5 V351.4" stroke="#27272a" stroke-width="4.4" stroke-linecap="round"/>
</svg>
<svg width="3142" height="1192" viewBox="0 0 3142 1192"><rect x="2263.3" y="1058.4" width="220.6" height="95.3" rx="17" fill="#c2c2c8"/><rect x="2267.4" y="1062.3" width="212.6" height="87.6" rx="13.2" fill="#80b7ea"/><rect x="2272.3" y="1066.9" width="203.2" height="78.9" rx="8.8" fill="#c9c9ce" stroke="#e3e7ee" stroke-width="1.6"/></svg>
<div class="t" style="left:2305.25px;top:1091px;font-size:26.00px;line-height:30px;color:#27272a;font-weight:bold;font-style:normal;letter-spacing:0.032px;">Autolayout</div>
<svg width="3142" height="1192" viewBox="0 0 3142 1192"><rect x="2517.3" y="1066.8" width="252.3" height="77.9" rx="9.5" fill="#f5f5f7" stroke="#ebebee" stroke-width="1.6"/><path d="M2690.4,1066.8 H2526.8 A9.5,9.5 0 0 0 2517.3,1076.3 V1135.2 A9.5,9.5 0 0 0 2526.8,1144.7 H2690.4 Z" fill="#f0f0f2" stroke="#dfdfe3" stroke-width="1.6"/></svg>
<div class="t" style="left:2589.94px;top:1091px;font-size:26.00px;line-height:30px;color:#27272a;font-weight:bold;font-style:normal;letter-spacing:0.302px;">Undo</div>
<svg width="3142" height="1192" viewBox="0 0 3142 1192"><rect x="2812" y="1067" width="297" height="77.6" rx="10.2" fill="#f0f0f2" stroke="#e2e2e6" stroke-width="1.6"/><rect x="2889.2" y="1067.8" width="3.5" height="76" fill="#e1e1e4"/><rect x="3028.2" y="1067.8" width="3.5" height="76" fill="#e1e1e4"/></svg>
<div class="t" style="left:2932.53px;top:1091px;font-size:26.00px;line-height:30px;color:#27272a;font-weight:bold;font-style:normal;letter-spacing:1.463px;">60%</div>
<svg width="3142" height="1192" viewBox="0 0 3142 1192">
<g fill="none" stroke="#27272a" stroke-width="4.2" stroke-linecap="round" stroke-linejoin="round">
<path d="M2557.6,1098.2 L2549.4,1106.3 L2557.6,1114.4"/>
<path d="M2727.4,1098.2 L2735.6,1106.3 L2727.4,1114.4" stroke="#a9a9b0" stroke-width="3.8"/>
<circle cx="2850.1" cy="1104.2" r="12.1"/>
<path d="M2859.2,1113.4 L2865,1119.4 M2844.2,1104.2 H2856" />
<circle cx="3068.8" cy="1104.2" r="12.1"/>
<path d="M3077.9,1113.4 L3083.7,1119.4 M3062.9,1104.2 H3074.7 M3068.8,1098.3 V1110.1" />
</g></svg>
</div>
</body></html>
